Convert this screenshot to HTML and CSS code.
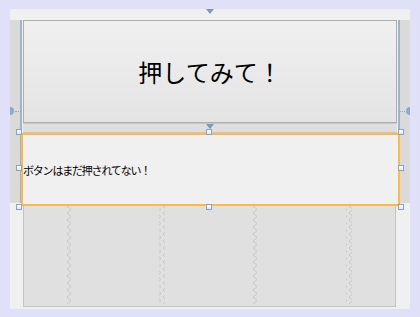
FILE: index.html
```html
<!DOCTYPE html>
<html lang="ja">
<head>
  <meta charset="UTF-8">
  <title>MainWindow</title>
  <link rel="stylesheet" href="styles.css">
</head>
<body>
  <div class="designer">
    <div class="gutter gutter-left"></div>
    <div class="gutter gutter-right"></div>
    <button class="push">押してみて！</button>
    <div class="splitter"></div>
    <div class="status">ボタンはまだ押されてない！</div>
    <div class="empty">
      <svg width="373" height="100">
        <defs>
          <pattern id="zig" width="6" height="7" patternUnits="userSpaceOnUse">
            <path d="M1 0 L5 3.5 L1 7" fill="none" stroke="#c6c6c6" stroke-width="1"/>
          </pattern>
        </defs>
        <rect x="43" y="0" width="6" height="98" fill="url(#zig)"/>
        <rect x="135" y="0" width="6" height="98" fill="url(#zig)"/>
        <rect x="228" y="0" width="6" height="98" fill="url(#zig)"/>
        <rect x="322" y="0" width="6" height="98" fill="url(#zig)"/>
      </svg>
    </div>

    <!-- designer adorners -->
    <div class="tri tri-top"></div>
    <div class="tri tri-mid"></div>
    <div class="blob blob-left"></div>
    <div class="blob blob-right"></div>
    <div class="handle h1"></div>
    <div class="handle h2"></div>
    <div class="handle h3"></div>
    <div class="handle h4"></div>
    <div class="handle h5"></div>
    <div class="handle h6"></div>
    <div class="handle h7"></div>
    <div class="handle h8"></div>
  </div>
</body>
</html>
```

FILE: styles.css
```css
body {
  margin: 0;
  width: 420px;
  height: 317px;
  background-color: #e0e0f9;
  overflow: hidden;
}
.designer {
  position: relative;
  margin: 9px 0 0 10px;
  width: 400px;
  height: 300px;
  background-color: #f0f0f0;
  display: grid;
  grid-template-columns: 12px 376px 12px;
  grid-template-rows: 11px 103px 10px 73px 101px 2px;
}
.gutter {
  grid-row: 2 / 5;
  background-color: #dadada;
  margin-bottom: 3px;
}
.gutter-left {
  grid-column: 1;
  border-right: 2px solid #9fb4ca;
}
.gutter-right {
  grid-column: 3;
  border-left: 2px solid #9fb4ca;
}
.push {
  grid-column: 2;
  grid-row: 2;
  margin: 0 1px 0 1px;
  border: 1px solid #adadad;
  background: linear-gradient(#f0f0f0, #e4e4e4);
  font-family: "Noto Sans CJK JP", sans-serif;
  font-size: 24px;
  color: #000;
  padding: 0;
}
.splitter {
  grid-column: 2;
  grid-row: 3;
  margin: 0 1px 0 1px;
  background-color: #dedede;
  border-top: 1px solid #c8c8c8;
  border-bottom: 1px solid #c8c8c8;
}
.status {
  grid-column: 1 / -1;
  grid-row: 4;
  margin: 0 10px 0 11px;
  border: 2px solid #ffba42;
  background-color: #f0f0f0;
  display: flex;
  align-items: center;
  font-family: "Noto Sans CJK JP", sans-serif;
  font-size: 11px;
  letter-spacing: -1.2px;
  color: #000;
  z-index: 1;
}
.empty {
  grid-column: 2;
  grid-row: 5;
  margin: 0 2px 0 1px;
  background-color: #e0e0e0;
  border: 1px solid #c3c3c3;
  border-top: none;
}
.empty svg {
  display: block;
}
.tri {
  position: absolute;
  width: 0;
  height: 0;
  border-left: 4px solid transparent;
  border-right: 4px solid transparent;
  border-top: 5px solid #7d9abb;
  z-index: 2;
}
.tri-top { left: 196px; top: 0; }
.tri-mid { left: 196px; top: 115px; }
.blob {
  position: absolute;
  top: 98px;
  width: 4px;
  height: 8px;
  background-color: #8fa9c6;
  z-index: 2;
}
.blob-left {
  left: 0;
  border-radius: 0 4px 4px 0;
}
.blob-left::after {
  content: "";
  position: absolute;
  left: 5px;
  top: 4px;
  width: 6px;
  border-top: 1px dotted #8fa9c6;
}
.blob-right {
  left: 396px;
  border-radius: 4px 0 0 4px;
}
.blob-right::after {
  content: "";
  position: absolute;
  right: 5px;
  top: 4px;
  width: 6px;
  border-top: 1px dotted #8fa9c6;
}
.handle {
  position: absolute;
  width: 4px;
  height: 4px;
  border: 1px solid #8aa2bf;
  background: linear-gradient(#ffffff, #dfe8f2);
  z-index: 3;
}
.h1 { left: 6px; top: 120px; }
.h2 { left: 196px; top: 120px; }
.h3 { left: 388px; top: 120px; }
.h4 { left: 6px; top: 156px; }
.h5 { left: 388px; top: 156px; }
.h6 { left: 6px; top: 195px; }
.h7 { left: 196px; top: 195px; }
.h8 { left: 388px; top: 195px; }
```
